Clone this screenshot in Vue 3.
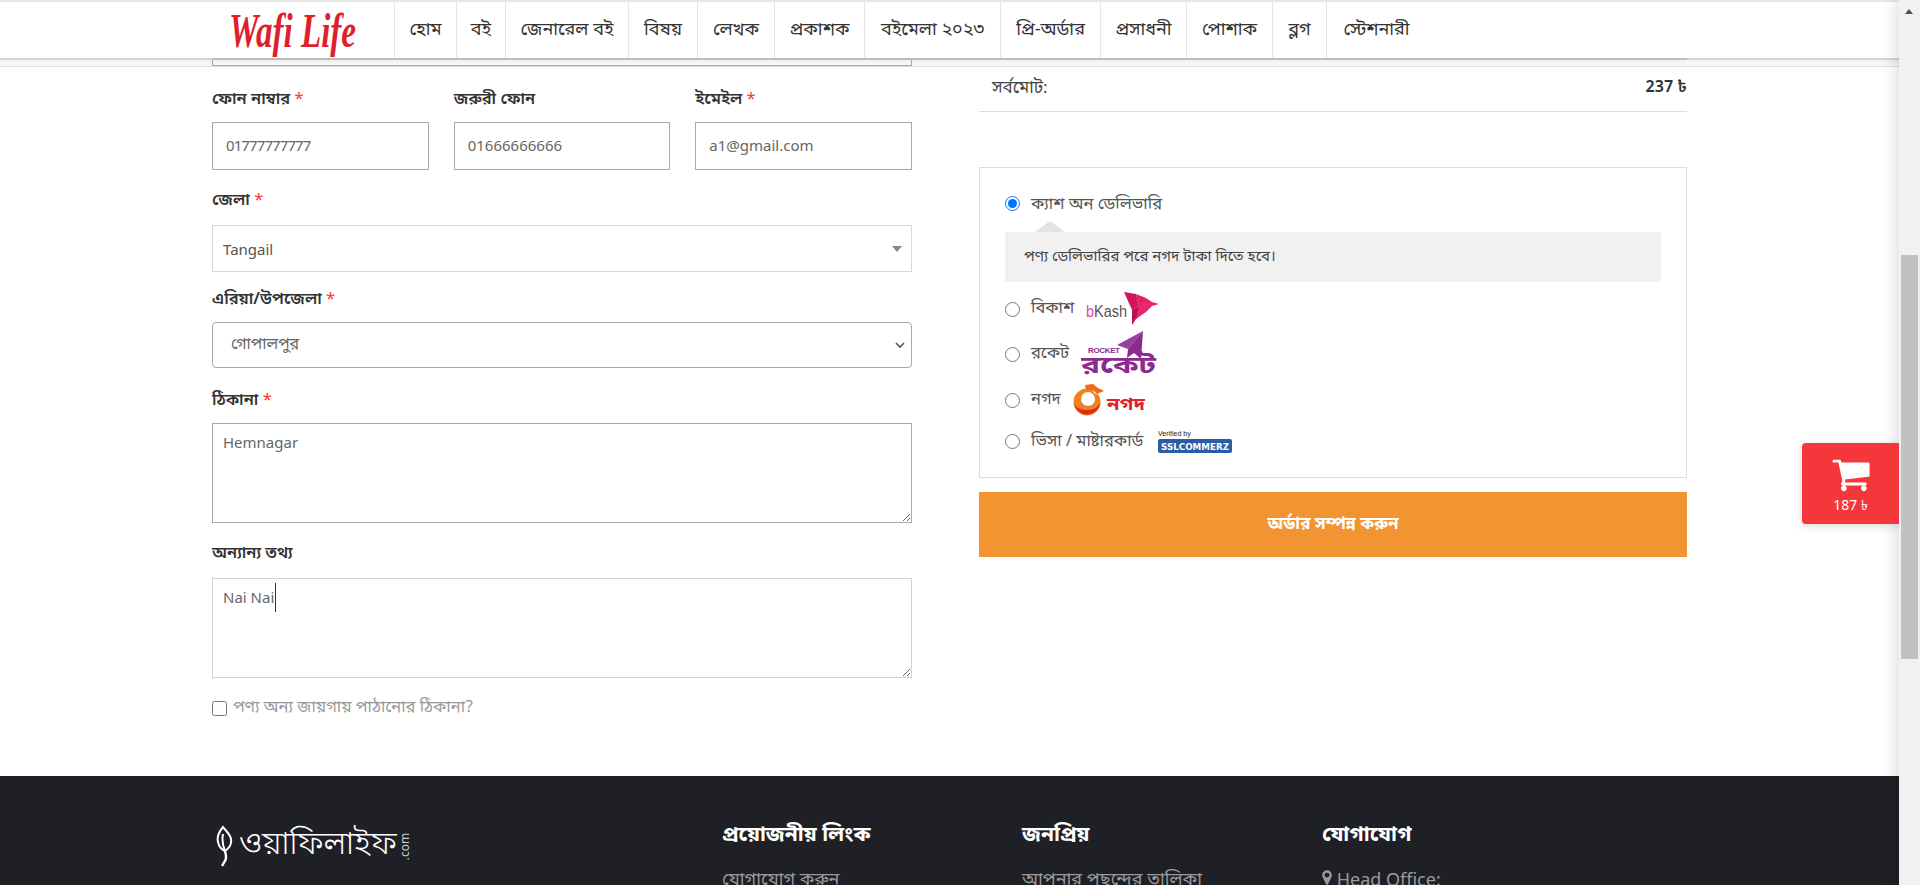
<template>
  <div class="window">
    <div class="viewport">
      <header class="topbar">
        <div class="topbar-inner">
          <a class="logo"><span>Wafi Life</span></a>
          <nav class="nav">
            <a v-for="item in navItems" :key="item.label" class="nav-item" :style="{ width: item.width + 'px' }">{{ item.label }}</a>
          </nav>
        </div>
      </header>

      <main class="content">
        <section class="form-col">
          <div class="cut-input"></div>

          <div class="three">
            <div v-for="f in contactFields" :key="f.label">
              <label class="lbl">{{ f.label }} <i v-if="f.required">*</i></label>
              <input class="field" :class="{ tight: f.tight }" type="text" :value="f.value">
            </div>
          </div>

          <label class="lbl lbl-district">জেলা <i>*</i></label>
          <div class="fake-select">
            <span>Tangail</span>
            <b class="select-caret"></b>
          </div>

          <label class="lbl lbl-area">এরিয়া/উপজেলা <i>*</i></label>
          <div class="select-wrap">
            <select class="native-select">
              <option>গোপালপুর</option>
            </select>
            <svg class="chevron" width="10" height="7" viewBox="0 0 10 7">
              <path d="M1 1l4 4 4-4" fill="none" stroke="#555" stroke-width="1.6" />
            </svg>
          </div>

          <label class="lbl lbl-address">ঠিকানা <i>*</i></label>
          <textarea class="area">Hemnagar</textarea>

          <label class="lbl lbl-other">অন্যান্য তথ্য</label>
          <div class="area-wrap">
            <textarea class="area area-focus">Nai Nai</textarea>
            <span class="caret"></span>
          </div>

          <label class="ship-other">
            <input type="checkbox">
            <span>পণ্য অন্য জায়গায় পাঠানোর ঠিকানা?</span>
          </label>
        </section>

        <section class="order-col">
          <div class="total-row">
            <span>সর্বমোট:</span>
            <strong>237 ৳</strong>
          </div>

          <div class="pay-box">
            <label class="pay-row pay-cod">
              <input type="radio" name="pay" checked>
              <span>ক্যাশ অন ডেলিভারি</span>
            </label>
            <div class="pay-note">পণ্য ডেলিভারির পরে নগদ টাকা দিতে হবে।</div>

            <label class="pay-row pay-bkash">
              <input type="radio" name="pay">
              <span>বিকাশ</span>
              <svg class="bkash" width="74" height="34" viewBox="0 0 74 34">
                <text x="0" y="25" font-family="Liberation Sans, sans-serif" font-size="16" fill="#55505a" textLength="41" lengthAdjust="spacingAndGlyphs"><tspan fill="#e2479b">b</tspan>Kash</text>
                <polygon points="38,0 50,2 53,14 46,18" fill="#d2145f" />
                <polygon points="50,2 60,6 53,20 53,14" fill="#e0205f" />
                <polygon points="46,18 53,14 58,18 50,27 46,33" fill="#b8124f" />
                <polygon points="53,14 60,6 66,10 73,12 66,14 60,20 50,27" fill="#e8256f" />
              </svg>
            </label>

            <label class="pay-row pay-rocket">
              <input type="radio" name="pay">
              <span>রকেট</span>
              <svg class="rocket" width="76" height="46" viewBox="0 0 76 46">
                <polygon points="62,0 36,14 47,18" fill="#9a3fa0" />
                <polygon points="62,0 47,18 46,27 53,22 60,28" fill="#8c2a8f" />
                <text x="7" y="22" font-family="Liberation Sans, sans-serif" font-size="8" font-weight="700" fill="#8c2a8f" textLength="32">ROCKET</text>
                <text x="0" y="42" font-family="Noto Sans Bengali, Noto Sans, sans-serif" font-size="24" font-weight="700" fill="#8c2a8f" textLength="75" lengthAdjust="spacingAndGlyphs">রকেট</text>
              </svg>
            </label>

            <label class="pay-row pay-nagad">
              <input type="radio" name="pay">
              <span>নগদ</span>
              <svg class="nagad" width="72" height="32" viewBox="0 0 72 32">
                <circle cx="14" cy="18" r="13.5" fill="#f0811e" />
                <path d="M1 20a13.5 13.5 0 0 0 26.5-1c-3 5-8 7-13 7S4 25 1 20z" fill="#dc2a1e" />
                <circle cx="15" cy="15" r="7" fill="#fff" />
                <polygon points="19,2 31,8 31,13 21,9" fill="#fff" />
                <polygon points="12,1 20,0 25,4 31,7 24,10 20,6 13,6" fill="#ee6a1c" />
                <text x="34" y="26" font-family="Noto Sans Bengali, Noto Sans, sans-serif" font-size="18" font-weight="700" fill="#e3202a" textLength="38" lengthAdjust="spacingAndGlyphs">নগদ</text>
              </svg>
            </label>

            <label class="pay-row pay-card">
              <input type="radio" name="pay">
              <span>ভিসা / মাষ্টারকার্ড</span>
              <svg class="ssl" width="74" height="25" viewBox="0 0 74 25">
                <text x="0" y="7" font-family="Liberation Sans, sans-serif" font-size="7" fill="#222">Verified by</text>
                <rect x="0" y="10" width="74" height="14" rx="2" fill="#2a5ca8" />
                <text x="3" y="21" font-family="DejaVu Sans, sans-serif" font-size="9" font-weight="700" fill="#fff" textLength="68" lengthAdjust="spacingAndGlyphs">SSLCOMMERZ</text>
              </svg>
            </label>
          </div>

          <button class="submit" type="button">অর্ডার সম্পন্ন করুন</button>
        </section>
      </main>

      <footer class="footer">
        <div class="footer-logo">
          <svg width="22" height="42" viewBox="0 0 22 42">
            <path d="M9 2C4 8 2 14 5 20c1 3 4 5 6 6 3-2 7-6 6-12-1-5-5-8-8-12zM9 9c-1 5-1 10 2 17" fill="none" stroke="#fff" stroke-width="2" />
            <path d="M11 26c1 4 2 7 0 10l-3 5" fill="none" stroke="#fff" stroke-width="2.4" />
          </svg>
          <span class="footer-brand">ওয়াফিলাইফ</span>
          <span class="footer-com">.com</span>
        </div>
        <div class="footer-col">
          <h4>প্রয়োজনীয় লিংক</h4>
          <a>যোগাযোগ করুন</a>
        </div>
        <div class="footer-col">
          <h4>জনপ্রিয়</h4>
          <a>আপনার পছন্দের তালিকা</a>
        </div>
        <div class="footer-col">
          <h4>যোগাযোগ</h4>
          <a>
            <svg width="10" height="17" viewBox="0 0 1024 1792"><path d="M768 640q0-106-75-181t-181-75-181 75-75 181 75 181 181 75 181-75 75-181zm256 0q0 109-33 179l-364 774q-16 33-47.5 52t-67.5 19-67.5-19-46.5-52l-365-774q-33-70-33-179 0-212 150-362t362-150 362 150 150 362z" fill="#9a9a9c" /></svg>
            Head Office:
          </a>
        </div>
      </footer>

      <div class="float-cart">
        <svg width="40" height="40" viewBox="0 0 1792 1792"><path d="M704 1536q0 52-38 90t-90 38-90-38-38-90 38-90 90-38 90 38 38 90zm896 0q0 52-38 90t-90 38-90-38-38-90 38-90 90-38 90 38 38 90zm128-1088v512q0 24-16.5 42.5t-40.5 21.5l-1044 122q13 60 13 70 0 16-24 64h920q26 0 45 19t19 45-19 45-45 19h-1024q-26 0-45-19t-19-45q0-11 8-31.5t16-36 21.5-40 15.5-29.5l-177-823h-204q-26 0-45-19t-19-45 19-45 45-19h256q16 0 28.5 6.5t19.5 15.5 13 24.5 8 26 5.5 29.5 4.5 26h1201q26 0 45 19t19 45z" fill="#fff" /></svg>
        <span>187 ৳</span>
      </div>
    </div>

    <div class="scrollbar">
      <span class="scroll-up"></span>
      <div class="scroll-thumb"></div>
    </div>
  </div>
</template>

<script setup>
const navItems = [
  { label: "হোম", width: 62 },
  { label: "বই", width: 49 },
  { label: "জেনারেল বই", width: 123 },
  { label: "বিষয়", width: 69 },
  { label: "লেখক", width: 77 },
  { label: "প্রকাশক", width: 90 },
  { label: "বইমেলা ২০২৩", width: 136 },
  { label: "প্রি-অর্ডার", width: 100 },
  { label: "প্রসাধনী", width: 86 },
  { label: "পোশাক", width: 86 },
  { label: "ব্লগ", width: 54 },
  { label: "স্টেশনারী", width: 100 }
]

const contactFields = [
  { label: "ফোন নাম্বার", required: true, value: "01777777777", tight: true },
  { label: "জরুরী ফোন", required: false, value: "01666666666" },
  { label: "ইমেইল", required: true, value: "a1@gmail.com" }
]
</script>

<style>
html, body {
  margin: 0;
  height: 885px;
  overflow: hidden;
  background: #fff;
}
</style>

<style scoped>
* {
  box-sizing: border-box;
}

.window {
  display: flex;
  width: 1920px;
  height: 885px;
  overflow: hidden;
  font-family: "Noto Sans Bengali", "Noto Sans", "Liberation Sans", sans-serif;
  color: #333;
}

.viewport {
  position: relative;
  width: 1899px;
  height: 885px;
  overflow: hidden;
  background: #fff;
}

.topbar {
  position: relative;
  z-index: 2;
  height: 60px;
  background: #fff;
  border-top: 2px solid #e6e6e6;
  border-bottom: 2px solid #d4d4d4;
}

/* darker part of the header edge, as wide as the container */
.topbar::after {
  content: "";
  position: absolute;
  left: 212px;
  right: 212px;
  bottom: -2px;
  height: 2px;
  background: #bdbdbd;
}

/* pale band and hairline under the header */
.topbar::before {
  content: "";
  position: absolute;
  left: 0;
  right: 0;
  top: 58px;
  height: 6px;
  background: linear-gradient(#f1f1f1, #fafafa);
  border-bottom: 1px solid #ddd;
}

.topbar-inner {
  display: flex;
  height: 56px;
  padding-left: 212px;
}

.logo {
  display: flex;
  align-items: center;
  width: 182px;
  padding-left: 17px;
  font-family: "Liberation Serif", serif;
  font-style: italic;
  font-weight: 700;
  color: #e01e2c;
}

.logo span {
  font-size: 38px;
  transform: scaleX(0.87) scaleY(1.3);
  transform-origin: left center;
  white-space: nowrap;
}

.nav {
  display: flex;
}

.nav-item {
  display: flex;
  align-items: center;
  justify-content: center;
  border-left: 1px solid #e5e5e5;
  font-size: 18px;
  color: #333;
  white-space: nowrap;
}

.content {
  display: grid;
  grid-template-columns: 700px 708px;
  column-gap: 67px;
  height: 716px;
  padding-left: 212px;
}

.cut-input {
  position: relative;
  z-index: 2;
  height: 6px;
  border: 1px solid #a9a9a9;
  border-top: 0;
}

.three {
  display: grid;
  grid-template-columns: repeat(3, 1fr);
  column-gap: 25px;
  margin-top: 20px;
}

.lbl {
  display: block;
  height: 36px;
  font-size: 16.5px;
  line-height: 22px;
  font-weight: 600;
  color: #333;
}

.three .lbl {
  padding-top: 3px;
}

.lbl i {
  color: #f33;
  font-style: normal;
  font-weight: 400;
}

.field {
  display: block;
  width: 100%;
  height: 48px;
  padding: 0 13px 2px;
  border: 1px solid #a9a9a9;
  border-radius: 0;
  font: 15px "Noto Sans", sans-serif;
  color: #666;
  outline: 0;
}

.tight {
  letter-spacing: -0.9px;
}

.lbl-district {
  margin-top: 20px;
  height: 35px;
}

.fake-select {
  display: flex;
  align-items: center;
  justify-content: space-between;
  height: 47px;
  padding: 0 9px 0 10px;
  border: 1px solid #d8d8d8;
  font: 15px "Noto Sans", sans-serif;
  color: #555;
}

.select-caret {
  width: 0;
  height: 0;
  border-left: 5px solid transparent;
  border-right: 5px solid transparent;
  border-top: 6px solid #888;
}

.lbl-area {
  margin-top: 15px;
  height: 35px;
  padding-top: 2px;
}

.select-wrap {
  position: relative;
}

.native-select {
  display: block;
  width: 100%;
  height: 46px;
  padding: 0 18px;
  border: 1px solid #a9a9a9;
  border-radius: 4px;
  background: #fff;
  appearance: none;
  font-family: inherit;
  font-size: 16px;
  color: #666;
  outline: 0;
}

.chevron {
  position: absolute;
  right: 7px;
  top: 20px;
}

.lbl-address {
  margin-top: 19px;
  height: 36px;
  padding-top: 3px;
}

.area {
  display: block;
  width: 100%;
  height: 100px;
  padding: 8px 10px;
  border: 1px solid #a9a9a9;
  border-radius: 0;
  font: 15px/20px "Noto Sans", sans-serif;
  color: #666;
  outline: 0;
}

.lbl-other {
  margin-top: 20px;
  height: 35px;
}

.area-wrap {
  position: relative;
}

.area-focus {
  border-color: #d3d3d3;
}

.caret {
  position: absolute;
  left: 63px;
  top: 5px;
  width: 1px;
  height: 29px;
  background: #333;
}

.ship-other {
  display: flex;
  align-items: center;
  gap: 6px;
  margin-top: 19px;
  font-size: 16.5px;
  color: #999;
}

.ship-other input {
  width: 15px;
  height: 15px;
  margin: 0;
}

.order-col {
  display: flex;
  flex-direction: column;
}

.total-row {
  display: flex;
  align-items: center;
  justify-content: space-between;
  height: 47px;
  margin-top: 5px;
  padding-left: 13px;
  border-bottom: 1px solid #ddd;
  font-size: 17px;
  color: #444;
}

.total-row strong {
  font-size: 16px;
  font-weight: 600;
  color: #333;
}

.pay-box {
  height: 311px;
  margin-top: 55px;
  padding: 21px 25px 0;
  border: 1px solid #ddd;
}

.pay-row {
  display: flex;
  align-items: center;
  font-size: 16.5px;
  color: #555;
}

.pay-row input {
  width: 15px;
  height: 15px;
  margin: 0 11px 0 0;
  flex: none;
}

.pay-cod {
  height: 29px;
}

.pay-cod span {
  padding-top: 2px;
}

.pay-note {
  position: relative;
  display: flex;
  align-items: center;
  height: 50px;
  margin-top: 14px;
  padding-left: 19px;
  background: #f1f1f1;
  font-size: 15px;
  color: #444;
}

.pay-note::before {
  content: "";
  position: absolute;
  left: 30px;
  top: -11px;
  border-left: 15px solid transparent;
  border-right: 15px solid transparent;
  border-bottom: 11px solid #e3e3e3;
}

.pay-bkash {
  height: 34px;
  margin-top: 10px;
}

.pay-rocket {
  height: 46px;
  margin-top: 5px;
}

.pay-nagad {
  height: 32px;
  margin-top: 7px;
}

.pay-card {
  height: 25px;
  margin-top: 13px;
}

.bkash,
.rocket,
.nagad {
  margin-left: 12px;
}

.ssl {
  margin-left: 15px;
}

.submit {
  height: 65px;
  margin-top: 14px;
  border: 0;
  background: #f39433;
  font-family: inherit;
  font-size: 17px;
  font-weight: 700;
  color: #fff;
}

.footer {
  display: grid;
  grid-template-columns: 510px 300px 300px 1fr;
  height: 109px;
  padding-left: 212px;
  background: #1f2026;
  color: #fff;
}

.footer-logo {
  display: flex;
  align-items: center;
  height: 48px;
  margin-top: 46px;
}

.footer-logo svg {
  margin-left: 2px;
  margin-right: 3px;
}

.footer-brand {
  font-size: 32px;
  line-height: 40px;
  font-weight: 300;
}

.footer-com {
  font-family: "Noto Sans", sans-serif;
  font-size: 12px;
  transform: rotate(-90deg);
  margin-left: -6px;
  color: #ccc;
}

.footer-col {
  padding-top: 46px;
}

.footer-col h4 {
  margin: 0 0 19px;
  font-size: 21px;
  line-height: 28px;
  font-weight: 700;
  color: #fff;
}

.footer-col a {
  display: block;
  font-size: 18px;
  line-height: 22px;
  color: #9a9a9c;
}

.float-cart {
  position: absolute;
  right: 0;
  top: 443px;
  z-index: 3;
  display: flex;
  flex-direction: column;
  align-items: center;
  width: 97px;
  height: 81px;
  padding-top: 11px;
  border-radius: 4px 0 0 4px;
  background: #f5363a;
  box-shadow: 0 2px 10px rgba(0, 0, 0, 0.15);
  color: #fff;
  font: 14px "Noto Sans", sans-serif;
}

.scrollbar {
  position: relative;
  z-index: 2;
  width: 21px;
  height: 885px;
  background: #f1f1f1;
  box-shadow: -4px 0 14px rgba(0, 0, 0, 0.13);
}

.scroll-up {
  position: absolute;
  left: 6px;
  top: 9px;
  border-left: 4px solid transparent;
  border-right: 4px solid transparent;
  border-bottom: 5px solid #505050;
}

.scroll-thumb {
  position: absolute;
  left: 2px;
  top: 255px;
  width: 17px;
  height: 404px;
  background: #c1c1c1;
}
</style>
